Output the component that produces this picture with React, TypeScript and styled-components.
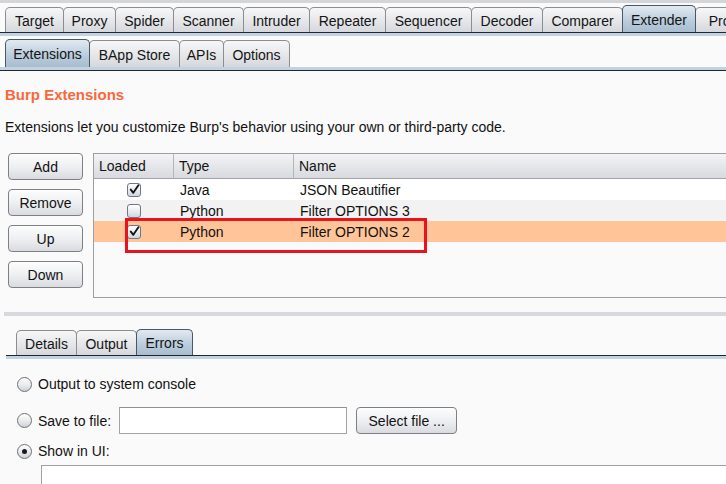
import styled, { createGlobalStyle, css } from "styled-components";

const GlobalStyle = createGlobalStyle`
  html, body {
    margin: 0;
    padding: 0;
    background: #fafafa;
    overflow: hidden;
  }
  body {
    font-family: "Liberation Sans", Arial, sans-serif;
    font-size: 14px;
    color: #111;
  }
`;

type TabDef = { label: string; width: number };

const mainTabs: TabDef[] = [
  { label: "Target", width: 59 },
  { label: "Proxy", width: 53 },
  { label: "Spider", width: 59 },
  { label: "Scanner", width: 71 },
  { label: "Intruder", width: 67 },
  { label: "Repeater", width: 77 },
  { label: "Sequencer", width: 87 },
  { label: "Decoder", width: 72 },
  { label: "Comparer", width: 81 },
  { label: "Extender", width: 74 },
  { label: "Project options", width: 120 },
];

const subTabs: TabDef[] = [
  { label: "Extensions", width: 85 },
  { label: "BApp Store", width: 91 },
  { label: "APIs", width: 45 },
  { label: "Options", width: 67 },
];

const detailTabs: TabDef[] = [
  { label: "Details", width: 61 },
  { label: "Output", width: 61 },
  { label: "Errors", width: 57 },
];

const extensions = [
  { loaded: true, type: "Java", name: "JSON Beautifier" },
  { loaded: false, type: "Python", name: "Filter OPTIONS 3" },
  { loaded: true, type: "Python", name: "Filter OPTIONS 2" },
];

const Page = styled.div`
  width: 726px;
  height: 484px;
  overflow: hidden;
`;

const TabBar = styled.div<{ $top?: boolean; $inset: number; $h: number }>`
  display: flex;
  align-items: flex-end;
  height: ${(p) => p.$h}px;
  padding-left: ${(p) => p.$inset}px;
  white-space: nowrap;
  overflow: hidden;
  ${(p) =>
    p.$top &&
    css`
      border-top: 3px solid #d4d5d8;
      padding-top: 2px;
    `}
`;

const Tab = styled.div<{ $active?: boolean; $w: number; $h: number }>`
  flex: none;
  box-sizing: border-box;
  width: ${(p) => p.$w}px;
  height: ${(p) => p.$h}px;
  margin-right: -1px;
  padding: 1px 8px 0;
  display: flex;
  align-items: center;
  justify-content: center;
  border: 1px solid ${(p) => (p.$active ? "#4a5866" : "#8c8d91")};
  border-bottom: none;
  border-radius: 5px 5px 0 0;
  background: ${(p) =>
    p.$active
      ? "linear-gradient(#e2eaf1, #b9cbdb 60%, #a9bdd0)"
      : "linear-gradient(#f7f7f8, #e4e5e8 60%, #d6d7dc)"};
  color: #141414;
  position: relative;
  z-index: ${(p) => (p.$active ? 1 : 0)};
`;

const TabLine = styled.div<{ $flip?: boolean; $inset?: number }>`
  margin-left: ${(p) => p.$inset ?? 0}px;
  height: 3px;
  background: #c2d2e0;
  ${(p) =>
    p.$flip
      ? css`
          border-bottom: 1px solid #1f2731;
        `
      : css`
          border-top: 1px solid #1f2731;
        `}
`;

const SubBarWrap = styled.div`
  margin-top: 3px;
`;

const Panel = styled.div`
  padding: 15px 0 0 5px;
`;

const Heading = styled.div`
  font-size: 15px;
  line-height: 17px;
  font-weight: bold;
  color: #f8683a;
`;

const Description = styled.div`
  margin-top: 16px;
  line-height: 16px;
`;

const ExtRow = styled.div`
  margin-top: 18px;
  display: flex;
  gap: 10px;
`;

const ButtonColumn = styled.div`
  margin-left: 3px;
  display: flex;
  flex-direction: column;
  gap: 9px;
`;

const Button = styled.button<{ $w?: number }>`
  box-sizing: border-box;
  width: ${(p) => p.$w ?? 75}px;
  height: 27px;
  padding: 0;
  font: inherit;
  color: #111;
  border: 1px solid #7d7f85;
  border-radius: 4px;
  background: linear-gradient(#fdfdfd, #eceef1 55%, #d9dbe0);
  box-shadow: inset 0 1px 0 #fff;
`;

const TableWrap = styled.div`
  position: relative;
  flex: 1;
  margin-right: -4px;
  height: 145px;
  box-sizing: border-box;
  border: 1px solid #9d9ea3;
  background: #fafafa;
`;

const HeaderRow = styled.div`
  display: flex;
  height: 24px;
  border-bottom: 1px solid #a4a5aa;
  background: linear-gradient(#f4f4f6, #e3e4e8 60%, #d9dadf);
`;

const HeadCell = styled.div<{ $w?: number }>`
  box-sizing: border-box;
  ${(p) => (p.$w ? `width: ${p.$w}px;` : "flex: 1;")}
  padding-left: 5px;
  display: flex;
  align-items: center;
  border-right: 1px solid #b4b5ba;
  color: #141414;
`;

const Row = styled.div<{ $shade: "white" | "grey" | "selected" }>`
  display: flex;
  height: 21px;
  background: ${(p) =>
    p.$shade === "selected" ? "#ffc599" : p.$shade === "grey" ? "#f2f2f2" : "#ffffff"};
`;

const Cell = styled.div<{ $w?: number; $center?: boolean }>`
  box-sizing: border-box;
  ${(p) => (p.$w ? `width: ${p.$w}px;` : "flex: 1;")}
  padding-left: ${(p) => (p.$center ? 0 : 6)}px;
  display: flex;
  align-items: center;
  justify-content: ${(p) => (p.$center ? "center" : "flex-start")};
`;

const Checkbox = styled.span`
  box-sizing: border-box;
  width: 14px;
  height: 14px;
  border: 1px solid #6f7886;
  border-radius: 3px;
  background: linear-gradient(#ffffff, #e4e8ee 60%, #cfd5de);
  display: flex;
  align-items: center;
  justify-content: center;
`;

const Highlight = styled.div`
  position: absolute;
  left: 31px;
  top: 64px;
  width: 302px;
  height: 35px;
  box-sizing: border-box;
  border: 3px solid #e8141d;
  pointer-events: none;
`;

const Divider = styled.div`
  margin: 14px 0 0 4px;
  height: 4px;
  background: #d8d9de;
`;

const DetailSection = styled.div`
  margin-top: 13px;
`;

const Options = styled.div`
  padding: 17px 0 0 17px;
  display: flex;
  flex-direction: column;
`;

const OptionRow = styled.div<{ $gap: number }>`
  margin-top: ${(p) => p.$gap}px;
  display: flex;
  align-items: center;
  line-height: 16px;
`;

const Radio = styled.span<{ $on?: boolean }>`
  box-sizing: border-box;
  flex: none;
  width: 15px;
  height: 15px;
  margin-right: 6px;
  border: 1px solid #6e7177;
  border-radius: 50%;
  background: linear-gradient(#ffffff, #e6e7ea 60%, #cfd1d6);
  display: flex;
  align-items: center;
  justify-content: center;
  &::after {
    content: "";
    display: ${(p) => (p.$on ? "block" : "none")};
    width: 5px;
    height: 5px;
    border-radius: 50%;
    background: #1a1a1a;
  }
`;

const TextField = styled.div`
  box-sizing: border-box;
  width: 228px;
  height: 27px;
  margin: 0 9px 0 8px;
  border: 1px solid #a3a4a8;
  border-top-color: #8e8f93;
  background: #fff;
`;

const OutputBox = styled.div`
  margin: 6px -4px 0 24px;
  height: 40px;
  border: 1px solid #9fa0a4;
  background: #fff;
`;

const Check = () => (
  <svg width="11" height="11" viewBox="0 0 11 11">
    <path
      d="M1.8 5.6 L4.3 8.8 L9.4 1.2"
      fill="none"
      stroke="#151515"
      strokeWidth="1.9"
      strokeLinecap="round"
      strokeLinejoin="round"
    />
  </svg>
);

type StripProps = {
  tabs: TabDef[];
  active: string;
  height: number;
  inactiveHeight: number;
  inset?: number;
  top?: boolean;
};

const TabStrip = ({ tabs, active, height, inactiveHeight, inset = 5, top }: StripProps) => (
  <TabBar $top={top} $inset={inset} $h={height}>
    {tabs.map((t) => (
      <Tab
        key={t.label}
        $w={t.width}
        $active={t.label === active}
        $h={t.label === active ? height : inactiveHeight}
      >
        {t.label}
      </Tab>
    ))}
  </TabBar>
);

export default function App() {
  return (
    <Page>
      <GlobalStyle />
      <TabStrip tabs={mainTabs} active="Extender" height={27} inactiveHeight={25} top />
      <TabLine />

      <SubBarWrap>
        <TabStrip tabs={subTabs} active="Extensions" height={28} inactiveHeight={27} />
        <TabLine $flip />
      </SubBarWrap>

      <Panel>
        <Heading>Burp Extensions</Heading>
        <Description>
          Extensions let you customize Burp's behavior using your own or third-party code.
        </Description>
        <ExtRow>
          <ButtonColumn>
            <Button>Add</Button>
            <Button>Remove</Button>
            <Button>Up</Button>
            <Button>Down</Button>
          </ButtonColumn>
          <TableWrap>
            <HeaderRow>
              <HeadCell $w={80}>Loaded</HeadCell>
              <HeadCell $w={120}>Type</HeadCell>
              <HeadCell>Name</HeadCell>
            </HeaderRow>
            {extensions.map((e, i) => (
              <Row key={e.name} $shade={i === 2 ? "selected" : i % 2 ? "grey" : "white"}>
                <Cell $w={80} $center>
                  <Checkbox>{e.loaded && <Check />}</Checkbox>
                </Cell>
                <Cell $w={120}>{e.type}</Cell>
                <Cell>{e.name}</Cell>
              </Row>
            ))}
            <Highlight />
          </TableWrap>
        </ExtRow>
      </Panel>

      <Divider />

      <DetailSection>
        <TabStrip tabs={detailTabs} active="Errors" height={26} inactiveHeight={25} inset={16} />
        <TabLine $inset={6} />
        <Options>
          <OptionRow $gap={0}>
            <Radio />
            Output to system console
          </OptionRow>
          <OptionRow $gap={15}>
            <Radio />
            Save to file:
            <TextField />
            <Button $w={101}>Select file ...</Button>
          </OptionRow>
          <OptionRow $gap={9}>
            <Radio $on />
            Show in UI:
          </OptionRow>
          <OutputBox />
        </Options>
      </DetailSection>
    </Page>
  );
}
